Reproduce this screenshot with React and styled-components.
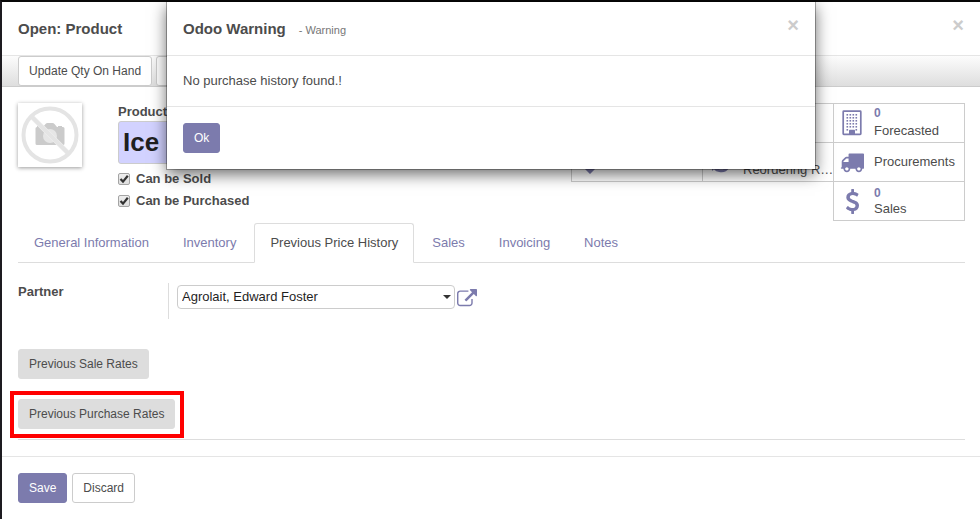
import React from "react";
import styled, { createGlobalStyle, css } from "styled-components";

const colors = {
  brand: "#7c7bad",
  text: "#4c4c4c",
  line: "#cccccc",
  softLine: "#e5e5e5",
  required: "#d2d2ff",
};

const GlobalStyle = createGlobalStyle`
  *, *::before, *::after { box-sizing: border-box; }
  html { background: #ffffff; }
  body {
    margin: 0;
    color: ${colors.text};
    font-family: "Liberation Sans", Arial, sans-serif;
    font-size: 13px;
    line-height: 20px;
  }
  button, input, select { font-family: inherit; }
`;

const Page = styled.div`
  min-height: 100vh;
  border-top: 2px solid #080808;
  border-left: 2px solid #1d1b20;
  background: #ffffff;
`;

const DialogHeader = styled.header`
  display: flex;
  align-items: center;
  gap: 13px;
  height: 54px;
  padding: 0 16px;
  border-bottom: 1px solid ${colors.softLine};
`;

const DialogTitle = styled.h1`
  margin: 0;
  font-size: 15px;
  line-height: 20px;
  font-weight: bold;
`;

const Subtitle = styled.small`
  padding-top: 2px;
  font-size: 11px;
  color: #777777;
`;

const CloseButton = styled.button`
  margin: 0 0 8px auto;
  padding: 0;
  border: 0;
  background: none;
  color: #cccccc;
  font-size: 20px;
  line-height: 20px;
  font-weight: bold;
`;

const Toolbar = styled.div`
  display: flex;
  gap: 4px;
  height: 31px;
  padding: 0 16px;
  border-bottom: 1px solid ${colors.line};
  background: linear-gradient(to bottom, #fcfcfc, #dedede);
`;

const variants = {
  primary: css`
    border-color: ${colors.brand};
    background: ${colors.brand};
    color: #ffffff;
  `,
  outline: css`
    border-color: ${colors.line};
    background: #ffffff;
    color: ${colors.text};
  `,
  muted: css`
    border-color: #dddddd;
    background: #dddddd;
    color: ${colors.text};
  `,
};

const Button = styled.button`
  height: 30px;
  min-width: 36px;
  padding: 0 10px;
  border: 1px solid;
  border-radius: 3px;
  font-size: 12px;
  line-height: 18px;
  ${(p) => variants[p.$variant]}
`;

const Sheet = styled.main`
  padding: 16px 15px 0 16px;
`;

const Summary = styled.section`
  display: flex;
  align-items: flex-start;
  min-height: 120px;
`;

const Thumbnail = styled.div`
  flex: none;
  width: 64px;
  height: 64px;
  margin-right: 36px;
  background: #ffffff;
  box-shadow: 0 1px 4px rgba(0, 0, 0, 0.4);
`;

const TitleBlock = styled.div`
  display: flex;
  flex: 1;
  flex-direction: column;
  min-width: 0;
  padding-right: 16px;
`;

const NameLabel = styled.label`
  font-weight: bold;
  line-height: 18px;
`;

const NameInput = styled.input`
  width: 100%;
  height: 43px;
  margin-bottom: 4px;
  padding: 0 4px;
  border: 1px solid ${colors.line};
  border-radius: 3px;
  background: ${colors.required};
  color: #1f1f1f;
  font-size: 26px;
  font-weight: bold;
`;

const CheckLabel = styled.label`
  display: flex;
  align-items: center;
  gap: 6px;
  height: 22px;
  font-weight: bold;
`;

const CheckFrame = styled.span`
  display: grid;
  width: 12px;
  height: 12px;
  > * { grid-area: 1 / 1; }
  svg { pointer-events: none; }
`;

const CheckInput = styled.input`
  appearance: none;
  width: 12px;
  height: 12px;
  margin: 0;
  border: 1px solid #a4a4a4;
  border-radius: 2px;
  background: linear-gradient(#eeeeee, #dedede);
  &:not(:checked) + svg { visibility: hidden; }
`;

const Stats = styled.div`
  display: grid;
  flex: none;
  grid-template-columns: repeat(3, 131px);
  grid-auto-rows: 39px;
  padding: 0 1px 1px 0;
`;

const StatButton = styled.button`
  display: flex;
  align-items: center;
  grid-column: ${(p) => p.$column};
  margin: 0 -1px -1px 0;
  padding: 0;
  border: 1px solid ${colors.line};
  background: #ffffff;
  color: ${colors.text};
  font-size: 13px;
  line-height: 17px;
  text-align: left;
`;

const StatIcon = styled.span`
  display: flex;
  flex: none;
  justify-content: center;
  width: 36px;
  margin-right: 4px;
  color: ${colors.brand};
`;

const StatText = styled.span`
  flex: 1;
  min-width: 0;
  padding-bottom: ${(p) => (p.$tight ? "0" : "2px")};
  line-height: ${(p) => (p.$tight ? "15px" : "17px")};
  white-space: nowrap;
`;

const StatValue = styled.strong`
  display: block;
  color: ${colors.brand};
  font-size: 12px;
`;

const Tabs = styled.nav`
  display: flex;
  gap: 2px;
  height: 40px;
  border-bottom: 1px solid #dddddd;
`;

const Tab = styled.a`
  height: 40px;
  padding: 9px 15px;
  border: 1px solid transparent;
  border-radius: 3px 3px 0 0;
  color: ${colors.brand};
  text-decoration: none;
  &[aria-current] {
    border-color: #dddddd;
    border-bottom-color: #ffffff;
    background: #ffffff;
    color: ${colors.text};
  }
`;

const TabPanel = styled.section`
  padding: 20px 0 10px;
  border-bottom: 1px solid #dddddd;
`;

const FieldRow = styled.div`
  display: grid;
  grid-template-columns: 150px 1fr;
  height: 36px;
  margin-bottom: 30px;
`;

const FieldLabel = styled.label`
  font-weight: bold;
  line-height: 18px;
`;

const FieldValue = styled.div`
  display: flex;
  gap: 2px;
  padding: 2px 0 0 8px;
  border-left: 1px solid #dddddd;
`;

const SelectFrame = styled.span`
  display: grid;
  align-items: center;
  width: 278px;
  height: 24px;
  > * { grid-area: 1 / 1; }
  svg {
    justify-self: end;
    margin-right: 4px;
    pointer-events: none;
  }
`;

const Select = styled.select`
  appearance: none;
  width: 100%;
  height: 24px;
  padding: 0 16px 1px 4px;
  border: 1px solid ${colors.line};
  border-radius: 4px;
  background: #ffffff;
  color: #1f1f1f;
  font-size: 13px;
`;

const IconButton = styled.button`
  display: flex;
  align-items: flex-end;
  height: 24px;
  padding: 0;
  border: 0;
  background: none;
  color: ${colors.brand};
`;

const ButtonStack = styled.div`
  display: flex;
  flex-direction: column;
  align-items: flex-start;
  gap: 20px;
`;

const Highlight = styled.div`
  position: relative;
  display: flex;
  &::after {
    content: "";
    position: absolute;
    inset: -8px -9px -9px -8px;
    border: 4px solid #ff0000;
    pointer-events: none;
  }
`;

const DialogFooter = styled.footer`
  display: flex;
  gap: 5px;
  margin-top: ${(p) => (p.$spaced ? "16px" : "0")};
  padding: 16px;
  border-top: 1px solid ${colors.softLine};
`;

const WarningDialog = styled.section`
  position: absolute;
  top: 2px;
  left: 2px;
  right: 0;
  max-width: 648px;
  margin: 0 auto;
  background: #ffffff;
  box-shadow: 0 0 0 1px rgba(0, 0, 0, 0.3), 0 5px 15px rgba(0, 0, 0, 0.6);
`;

const WarningBody = styled.p`
  margin: 0;
  padding: 15px 16px;
`;

const iconPaths = {
  dollar:
    "M1362 1185q0 153-99.5 263.5t-258.5 136.5v175q0 14-9 23t-23 9h-135q-13 0-22.5-9.5t-9.5-22.5v-175q-66-9-127.5-31t-101.5-44.5-74-48-46.5-37.5-17.5-18q-17-21-2-41l103-135q7-10 23-12 15-2 24 9l2 2q113 99 243 125 37 8 74 8 81 0 142.5-43t61.5-122q0-28-15-53t-33.5-42-58.5-37.5-66-32-80-32.5q-39-16-61.5-25t-61.5-26.5-62.5-31-56.5-35.5-53.5-42.5-43.5-49-35.5-58-21-66.5-8.5-78q0-138 98-242t255-134v-180q0-13 9.5-22.5t22.5-9.5h135q14 0 23 9t9 23v176q57 6 110.5 23t87 33.5 63.5 37.5 39 29 15 14q17 18 5 38l-81 146q-8 15-23 16-14 3-27-7-3-3-14.5-12t-39-26.5-58.5-32-74.5-26-85.5-11.5q-95 0-155 43t-60 111q0 26 8.5 48t29.5 41.5 39.5 33 56 31 60.5 27 70 27.5q53 20 81 31.5t76 35 75.5 42.5 62 50 53 63.5 31.5 76.5 13 94z",
  truck:
    "M640 1408q0-52-38-90t-90-38-90 38-38 90 38 90 90 38 90-38 38-90zm-384-512h384v-256h-158q-13 0-22 9l-195 195q-9 9-9 22v30zm1280 512q0-52-38-90t-90-38-90 38-38 90 38 90 90 38 90-38 38-90zm256-1088v1024q0 15-4 26.5t-13.5 18.5-16.5 11.5-23.5 6-22.5 2-25.5 0-22.5-.5q0 106-75 181t-181 75-181-75-75-181h-384q0 106-75 181t-181 75-181-75-75-181h-64q-3 0-22.5.5t-25.5 0-22.5-2-23.5-6-16.5-11.5-13.5-18.5-4-26.5q0-26 19-45t45-19v-320q0-8-.5-35t0-38 2.5-34.5 6.5-37 14-30.5 22.5-30l198-198q19-19 50.5-32t58.5-13h160v-192q0-26 19-45t45-19h1024q26 0 45 19t19 45z",
  external:
    "M1408 928v320q0 119-84.5 203.5t-203.5 84.5h-832q-119 0-203.5-84.5t-84.5-203.5v-832q0-119 84.5-203.5t203.5-84.5h704q14 0 23 9t9 23v64q0 14-9 23t-23 9h-704q-66 0-113 47t-47 113v832q0 66 47 113t113 47h832q66 0 113-47t47-113v-320q0-14 9-23t23-9h64q14 0 23 9t9 23zm384-864v512q0 26-19 45t-45 19-45-19l-176-176-652 652q-10 10-23 10t-23-10l-114-114q-10-10-10-23t10-23l652-652-176-176q-19-19-19-45t19-45 45-19h512q26 0 45 19t19 45z",
};

function Icon({ name, size }) {
  return (
    <svg width={size} height={size} viewBox="0 0 1792 1792" fill="currentColor" aria-hidden="true">
      <path d={iconPaths[name]} />
    </svg>
  );
}

function BuildingIcon() {
  const rows = [4, 7, 10, 13, 16];
  const cols = [4, 7, 10, 13];
  return (
    <svg width="20" height="26" viewBox="0 0 20 26" fill="currentColor" aria-hidden="true">
      <rect x="1.2" y="1.2" width="17.6" height="23.2" rx="0.6" fill="none" stroke="currentColor" strokeWidth="1.7" />
      {rows.map((y) => cols.map((x) => <rect key={`${x}-${y}`} x={x + 0.5} y={y} width="1.6" height="1.6" />))}
      <rect x="4.5" y="19" width="1.6" height="1.6" />
      <rect x="13.5" y="19" width="1.6" height="1.6" />
      <path d="M7 24.5v-4q0-.8.8-.8h4.4q.8 0 .8.8v4z" />
    </svg>
  );
}

function UpDownIcon() {
  return (
    <svg width="12" height="26" viewBox="0 0 12 26" fill="currentColor" aria-hidden="true">
      <path d="M6 0 11 5H7.5V20H11L6 25 1 20H4.5V5H1z" />
    </svg>
  );
}

function RefreshIcon() {
  return (
    <svg width="22" height="22" viewBox="0 0 22 22" fill="none" stroke="currentColor" strokeWidth="3" aria-hidden="true">
      <path d="M19 9A8.2 8.2 0 0 0 4 6M3 13a8.2 8.2 0 0 0 15 3" />
      <path d="M20 2v7h-7zM2 20v-7h7z" fill="currentColor" stroke="none" />
    </svg>
  );
}

function NoPhoto() {
  return (
    <svg width="64" height="64" viewBox="0 0 64 64" role="img" aria-label="No photo">
      <path d="M19 24v-1h4v1h2l2.500-3q.8-1 2-1h5q1.200 0 2 1l2.500 3h1v-1h4v1h1q1.500 0 1.500 1.500v15q0 1.500-1.500 1.500H19q-1.500 0-1.500-1.500v-15Q17.500 24 19 24z" fill="#cbcbcb" />
      <circle cx="32" cy="33" r="7" fill="#e6e6e6" />
      <path d="M13 13 51 51" stroke="#f4f4f4" strokeWidth="5" />
      <circle cx="32" cy="32" r="26.5" fill="none" stroke="#e4e4e4" strokeWidth="4" />
      <path d="M13 13 51 51" stroke="#e4e4e4" strokeWidth="4" />
    </svg>
  );
}

function Checkbox({ id, label }) {
  return (
    <CheckLabel htmlFor={id}>
      <CheckFrame>
        <CheckInput id={id} type="checkbox" defaultChecked />
        <svg width="12" height="12" viewBox="0 0 12 12" fill="none" stroke="#333333" strokeWidth="2.2" aria-hidden="true">
          <path d="M2.5 6 5 8.6 9.8 2.8" />
        </svg>
      </CheckFrame>
      {label}
    </CheckLabel>
  );
}

function Stat({ icon, value, label, column, tight }) {
  return (
    <StatButton type="button" $column={column}>
      <StatIcon>{icon}</StatIcon>
      <StatText $tight={tight}>
        {value && <StatValue>{value}</StatValue>}
        {label}
      </StatText>
    </StatButton>
  );
}

const tabs = ["General Information", "Inventory", "Previous Price History", "Sales", "Invoicing", "Notes"];

export default function App() {
  return (
    <>
      <GlobalStyle />
      <Page>
        <DialogHeader>
          <DialogTitle>Open: Product</DialogTitle>
          <CloseButton type="button">×</CloseButton>
        </DialogHeader>
        <Toolbar>
          <Button type="button" $variant="outline">Update Qty On Hand</Button>
          <Button type="button" $variant="outline" />
        </Toolbar>
        <Sheet>
          <Summary>
            <Thumbnail><NoPhoto /></Thumbnail>
            <TitleBlock>
              <NameLabel htmlFor="name">Product</NameLabel>
              <NameInput id="name" defaultValue="Ice Cream" />
              <Checkbox id="sold" label="Can be Sold" />
              <Checkbox id="purchased" label="Can be Purchased" />
            </TitleBlock>
            <Stats>
              <Stat column={1} />
              <Stat column={2} />
              <Stat column={3} icon={<BuildingIcon />} value="0" label="Forecasted" />
              <Stat column={1} icon={<UpDownIcon />} />
              <Stat column={2} icon={<RefreshIcon />} value="0" label="Reordering R…" />
              <Stat column={3} icon={<Icon name="truck" size={24} />} label="Procurements" />
              <Stat column={3} icon={<Icon name="dollar" size={25} />} value="0" label="Sales" tight />
            </Stats>
          </Summary>
          <Tabs>
            {tabs.map((name) => (
              <Tab key={name} href="#" aria-current={name === "Previous Price History" ? "page" : undefined}>
                {name}
              </Tab>
            ))}
          </Tabs>
          <TabPanel>
            <FieldRow>
              <FieldLabel htmlFor="partner">Partner</FieldLabel>
              <FieldValue>
                <SelectFrame>
                  <Select id="partner">
                    <option>Agrolait, Edward Foster</option>
                  </Select>
                  <svg width="8" height="4" viewBox="0 0 8 4" fill="#333333" aria-hidden="true">
                    <path d="M0 0h8L4 4z" />
                  </svg>
                </SelectFrame>
                <IconButton type="button" aria-label="Open partner">
                  <Icon name="external" size={20} />
                </IconButton>
              </FieldValue>
            </FieldRow>
            <ButtonStack>
              <Button type="button" $variant="muted">Previous Sale Rates</Button>
              <Highlight>
                <Button type="button" $variant="muted">Previous Purchase Rates</Button>
              </Highlight>
            </ButtonStack>
          </TabPanel>
        </Sheet>
        <DialogFooter $spaced>
          <Button type="button" $variant="primary">Save</Button>
          <Button type="button" $variant="outline">Discard</Button>
        </DialogFooter>
      </Page>
      <WarningDialog role="dialog" aria-labelledby="warning-title">
        <DialogHeader>
          <DialogTitle as="h2" id="warning-title">Odoo Warning</DialogTitle>
          <Subtitle>- Warning</Subtitle>
          <CloseButton type="button">×</CloseButton>
        </DialogHeader>
        <WarningBody>No purchase history found.!</WarningBody>
        <DialogFooter>
          <Button type="button" $variant="primary">Ok</Button>
        </DialogFooter>
      </WarningDialog>
    </>
  );
}
